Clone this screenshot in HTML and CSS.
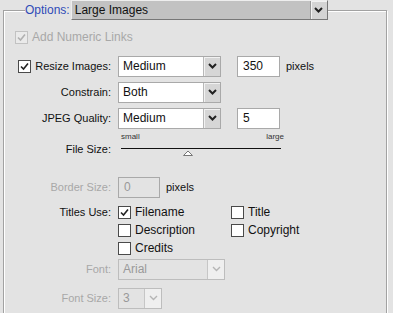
FILE: index.html
```html
<!DOCTYPE html>
<html lang="en">
<head>
  <meta charset="UTF-8">
  <title>Options</title>
  <link rel="stylesheet" href="styles.css">
</head>
<body>

  <fieldset class="panel">
    <legend class="panel-head">
      <span class="head-label">Options:</span>
      <span class="select select-head">
        <span class="select-value">Large Images</span>
        <span class="select-btn"><svg width="9" height="6" viewBox="0 0 9 6"><path d="M1 1 L4.5 4.5 L8 1" fill="none" stroke="#222" stroke-width="2"/></svg></span>
      </span>
    </legend>

    <div class="row row-numeric disabled">
      <span class="check checked"><svg width="11" height="11" viewBox="0 0 11 11"><path d="M2 5.5 L4.5 8 L9 2.5" fill="none" stroke="#b0b0b0" stroke-width="1.6"/></svg></span>
      <span>Add Numeric Links</span>
    </div>

    <div class="row row-field row-resize">
      <label class="lbl">
        <span class="check checked lbl-check"><svg width="11" height="11" viewBox="0 0 11 11"><path d="M2 5.5 L4.5 8 L9 2.5" fill="none" stroke="#222" stroke-width="1.6"/></svg></span>
        Resize Images:
      </label>
      <span class="select w-md">
        <span class="select-value">Medium</span>
        <span class="select-btn"><svg width="9" height="6" viewBox="0 0 9 6"><path d="M1 1 L4.5 4.5 L8 1" fill="none" stroke="#222" stroke-width="2"/></svg></span>
      </span>
      <span class="input w-num">350</span>
      <span class="unit">pixels</span>
    </div>

    <div class="row row-field">
      <label class="lbl">Constrain:</label>
      <span class="select w-md">
        <span class="select-value">Both</span>
        <span class="select-btn"><svg width="9" height="6" viewBox="0 0 9 6"><path d="M1 1 L4.5 4.5 L8 1" fill="none" stroke="#222" stroke-width="2"/></svg></span>
      </span>
    </div>

    <div class="row row-field">
      <label class="lbl">JPEG Quality:</label>
      <span class="select w-md">
        <span class="select-value">Medium</span>
        <span class="select-btn"><svg width="9" height="6" viewBox="0 0 9 6"><path d="M1 1 L4.5 4.5 L8 1" fill="none" stroke="#222" stroke-width="2"/></svg></span>
      </span>
      <span class="input w-num">5</span>
    </div>

    <div class="scale">
      <span>small</span>
      <span>large</span>
    </div>
    <div class="row row-slider">
      <label class="lbl">File Size:</label>
      <div class="slider">
        <svg class="thumb" width="10" height="6" viewBox="0 0 10 6"><path d="M0.5 5.5 L5 1 L9.5 5.5 Z" fill="#fff" stroke="#777" stroke-width="1"/></svg>
      </div>
    </div>

    <div class="row row-field row-border disabled">
      <label class="lbl">Border Size:</label>
      <span class="input w-num">0</span>
      <span class="unit unit-on">pixels</span>
    </div>

    <div class="row row-titles">
      <label class="lbl">Titles Use:</label>
      <div class="opts">
        <span class="opt"><span class="check checked"><svg width="11" height="11" viewBox="0 0 11 11"><path d="M2 5.5 L4.5 8 L9 2.5" fill="none" stroke="#222" stroke-width="1.6"/></svg></span>Filename</span>
        <span class="opt"><span class="check"></span>Title</span>
        <span class="opt"><span class="check"></span>Description</span>
        <span class="opt"><span class="check"></span>Copyright</span>
        <span class="opt"><span class="check"></span>Credits</span>
      </div>
    </div>

    <div class="row row-field row-font disabled">
      <label class="lbl">Font:</label>
      <span class="select w-font">
        <span class="select-value">Arial</span>
        <span class="select-btn"><svg width="9" height="6" viewBox="0 0 9 6"><path d="M1 1 L4.5 4.5 L8 1" fill="none" stroke="#b5b5b5" stroke-width="1.4"/></svg></span>
      </span>
    </div>

    <div class="row row-field row-size disabled">
      <label class="lbl">Font Size:</label>
      <span class="select w-size">
        <span class="select-value">3</span>
        <span class="select-btn"><svg width="9" height="6" viewBox="0 0 9 6"><path d="M1 1 L4.5 4.5 L8 1" fill="none" stroke="#b5b5b5" stroke-width="1.4"/></svg></span>
      </span>
    </div>
  </fieldset>

</body>
</html>
```

FILE: styles.css
```css
body {
  margin: 0;
  background: #e3e3e3;
  font-family: "Liberation Sans", Arial, sans-serif;
  font-size: 11px;
  color: #111;
}

.panel {
  margin: 0 6px 0 3px;
  padding: 0 0 40px;
  min-width: 0;
  border: 1px solid #a2a2a2;
  box-shadow: inset 1px 1px 0 #fff, 1px 1px 0 #fff;
}

.panel-head {
  display: flex;
  align-items: center;
  margin-left: 21px;
  padding: 0;
  background: #e3e3e3;
}

.head-label {
  color: #2f4bb8;
  font-size: 12px;
  padding-right: 1px;
}

.row {
  display: flex;
  align-items: center;
}

.lbl {
  flex: none;
  width: 107px;
  padding-right: 7px;
  display: flex;
  justify-content: flex-end;
  align-items: center;
  white-space: nowrap;
}

.lbl-check {
  margin-right: 4px;
}

/* selects and inputs */
.select {
  display: flex;
  height: 21px;
  box-sizing: border-box;
  border: 1px solid #a9a9a9;
  background: #fff;
}

.select-value {
  flex: 1;
  padding-left: 4px;
  line-height: 19px;
  font-size: 12px;
}

.select-btn {
  flex: none;
  width: 16px;
  display: flex;
  align-items: center;
  justify-content: center;
  background: #d6d6d6;
  border-left: 1px solid #b8b8b8;
  box-shadow: inset 1px 1px 0 #f2f2f2;
}

.select-head {
  width: 257px;
  height: 20px;
  background: #c2c2c2;
  border-color: #eee #777 #777 #eee;
}

.select-head .select-value {
  line-height: 18px;
  padding-left: 3px;
}

.select-head .select-btn {
  background: #d4d4d4;
  border-left: 1px solid #9a9a9a;
}

.w-md { width: 103px; }
.w-font { width: 107px; }
.w-size { width: 44px; }

.input {
  display: block;
  height: 21px;
  box-sizing: border-box;
  border: 1px solid #a9a9a9;
  background: #fff;
  padding-left: 5px;
  line-height: 19px;
  font-size: 12px;
}

.w-num {
  width: 43px;
  margin-left: 16px;
}

.unit {
  margin-left: 6px;
}

/* checkboxes */
.check {
  flex: none;
  width: 13px;
  height: 13px;
  box-sizing: border-box;
  border: 1px solid #4a4a4a;
  background: #fff;
  display: inline-flex;
  align-items: center;
  justify-content: center;
}

/* rows */
.row-numeric {
  margin-top: 9px;
  height: 16px;
  padding-left: 11px;
  gap: 4px;
  font-size: 12px;
}

.row-field {
  height: 22px;
  margin-top: 4px;
}

.row-resize {
  margin-top: 10px;
}

.scale {
  display: flex;
  justify-content: space-between;
  width: 163px;
  margin: 3px 0 0 117px;
  font-size: 8px;
  color: #333;
  height: 10px;
  line-height: 10px;
}

.row-slider {
  height: 14px;
  margin-top: 0;
  align-items: flex-start;
}

.row-slider .lbl {
  line-height: 14px;
}

.slider {
  width: 160px;
  margin: 6px 0 0 3px;
  border-top: 1px solid #111;
}

.thumb {
  display: block;
  margin: 1px 0 0 62px;
}

.row-border {
  margin-top: 20px;
}

.row-border .w-num {
  margin-left: 0;
  width: 42px;
  background: #e3e3e3;
}

.unit-on {
  color: #111;
}

.row-titles {
  margin-top: 5px;
  align-items: flex-start;
}

.row-titles .lbl {
  height: 18px;
}

.opts {
  display: grid;
  grid-template-columns: 113px auto;
  grid-auto-rows: 18px;
}

.opt {
  display: flex;
  align-items: center;
  gap: 4px;
  font-size: 12px;
}

.row-font {
  margin-top: 1px;
}

.row-size {
  margin-top: 7px;
}

/* disabled state */
.disabled {
  color: #a8a8a8;
}

.disabled .check {
  border-color: #c2c2c2;
  background: #eaeaea;
}

.disabled .select {
  background: #e3e3e3;
  border-color: #bdbdbd;
}

.disabled .select-value {
  color: #999;
}

.disabled .select-btn {
  background: #efefef;
  border-left: 1px solid #c6c6c6;
  box-shadow: none;
}

.disabled .input {
  border-color: #a9a9a9;
  color: #999;
}
```
